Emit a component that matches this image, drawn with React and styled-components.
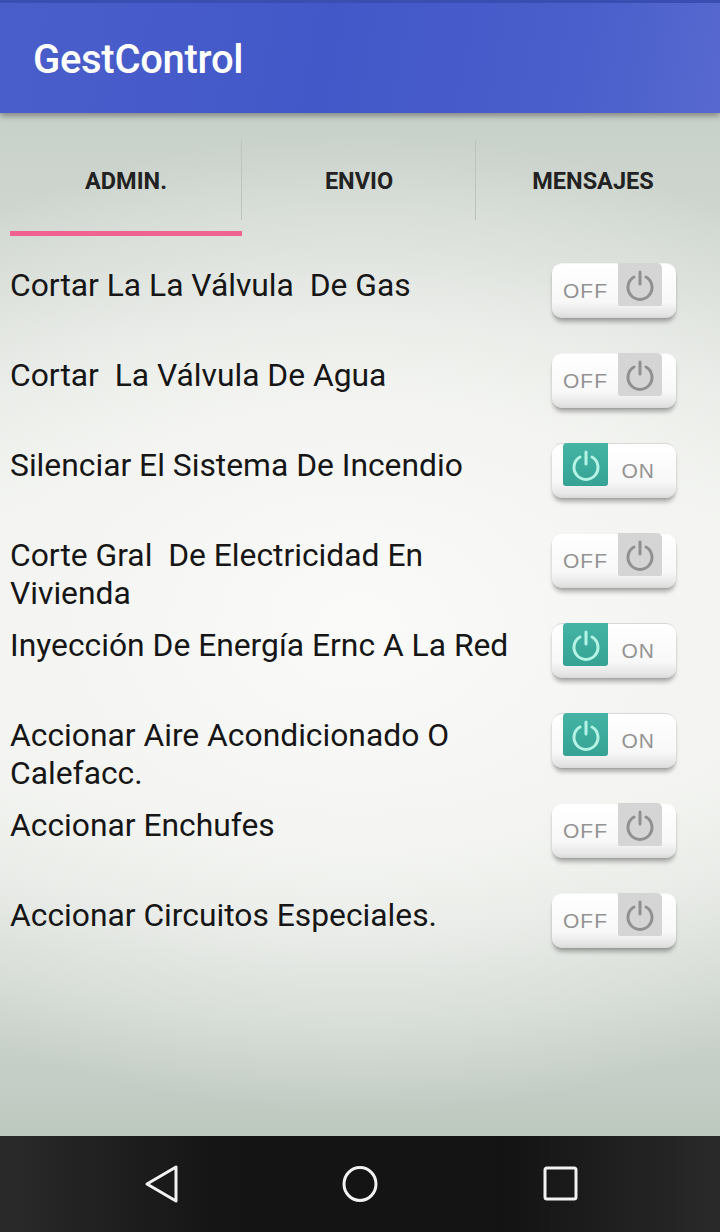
import React from 'react';
import styled, { createGlobalStyle } from 'styled-components';

const GlobalStyle = createGlobalStyle`
  html, body {
    margin: 0;
    padding: 0;
  }
  body {
    font-family: Roboto, "Noto Sans", sans-serif;
  }
`;

const items = [
  { label: 'Cortar La La Válvula  De Gas', on: false },
  { label: 'Cortar  La Válvula De Agua', on: false },
  { label: 'Silenciar El Sistema De Incendio', on: true },
  { label: 'Corte Gral  De Electricidad En Vivienda', on: false },
  { label: 'Inyección De Energía Ernc A La Red', on: true },
  { label: 'Accionar Aire Acondicionado O Calefacc.', on: true },
  { label: 'Accionar Enchufes', on: false },
  { label: 'Accionar Circuitos Especiales.', on: false },
];

const tabs = ['ADMIN.', 'ENVIO', 'MENSAJES'];

function PowerIcon({ color }) {
  return (
    <svg width="34" height="34" viewBox="0 0 34 34">
      <path d="M11 9 A12 12 0 1 0 23 9" fill="none" stroke={color} strokeWidth="3" strokeLinecap="round" />
      <line x1="17" y1="4" x2="17" y2="16" stroke={color} strokeWidth="3" strokeLinecap="round" />
    </svg>
  );
}

function Toggle({ on }) {
  return (
    <SwitchBody on={on}>
      {on ? (
        <>
          <Knob on>
            <PowerIcon color="#b5f3e6" />
          </Knob>
          <SwitchLabel on>ON</SwitchLabel>
        </>
      ) : (
        <>
          <SwitchLabel>OFF</SwitchLabel>
          <Knob>
            <PowerIcon color="#909090" />
          </Knob>
        </>
      )}
    </SwitchBody>
  );
}

export default function App() {
  return (
    <Page>
      <GlobalStyle />
      <AppBar>
        <Title>GestControl</Title>
      </AppBar>
      <Content>
        <TabBar>
          {tabs.map((t, i) => (
            <Tab key={t} active={i === 0} divider={i < tabs.length - 1}>
              {t}
            </Tab>
          ))}
        </TabBar>
        <List>
          {items.map((item) => (
            <Row key={item.label}>
              <Label>{item.label}</Label>
              <Toggle on={item.on} />
            </Row>
          ))}
        </List>
      </Content>
      <NavBar>
        <NavSlot>
          <svg width="40" height="40" viewBox="0 0 40 40">
            <path d="M36 3 L36 37 L7 20 Z" fill="none" stroke="#f2f2f2" strokeWidth="3" strokeLinejoin="round" />
          </svg>
        </NavSlot>
        <NavSlot>
          <svg width="40" height="40" viewBox="0 0 40 40">
            <ellipse cx="20" cy="20" rx="16" ry="16.5" fill="none" stroke="#f2f2f2" strokeWidth="3" />
          </svg>
        </NavSlot>
        <NavSlot>
          <svg width="40" height="40" viewBox="0 0 40 40">
            <rect x="5" y="4" width="31" height="31" rx="2" fill="none" stroke="#f2f2f2" strokeWidth="3" />
          </svg>
        </NavSlot>
      </NavBar>
    </Page>
  );
}

const Page = styled.div`
  width: 720px;
  height: 1232px;
  display: flex;
  flex-direction: column;
  overflow: hidden;
`;

const AppBar = styled.header`
  height: 113px;
  flex: none;
  display: flex;
  align-items: center;
  padding: 0 33px;
  box-sizing: border-box;
  background: linear-gradient(100deg, #4a5ecb 0%, #4358c8 45%, #4a5fcb 80%, #5769d0 100%);
  border-top: 3px solid #3a4db0;
  box-shadow: 0 3px 6px rgba(0, 0, 0, 0.35);
  position: relative;
  z-index: 2;
`;

const Title = styled.h1`
  margin: 0;
  padding-top: 2px;
  font-family: Roboto, sans-serif;
  font-weight: 500;
  font-size: 40px;
  color: #ffffff;
  letter-spacing: -0.3px;
`;

const Content = styled.main`
  flex: 1;
  background:
    radial-gradient(ellipse 95% 48% at 50% 50%, rgba(250, 251, 248, 1) 0%, rgba(245, 246, 243, 0.9) 45%, rgba(245, 246, 243, 0) 100%),
    linear-gradient(180deg, #c7d0c9 0%, #d3d9d3 15%, #eef0ec 40%, #eef0ec 65%, #d4dad4 82%, #bdc8bf 100%);
`;

const TabBar = styled.nav`
  display: grid;
  grid-template-columns: 232px 234px 234px;
  padding: 0 10px;
  height: 123px;
`;

const Tab = styled.div`
  display: flex;
  align-items: center;
  justify-content: center;
  padding-top: 17px;
  font-family: Roboto, sans-serif;
  font-weight: 700;
  font-size: 23.5px;
  color: #222;
  position: relative;
  border-bottom: 5px solid ${(p) => (p.active ? '#f06292' : 'transparent')};
  &::after {
    content: '';
    display: ${(p) => (p.divider ? 'block' : 'none')};
    position: absolute;
    right: 0;
    top: 27px;
    bottom: 11px;
    width: 1px;
    background: #bcc4be;
  }
`;

const List = styled.div`
  padding-top: 20px;
`;

const Row = styled.div`
  height: 90px;
  display: flex;
  align-items: flex-start;
  padding: 0 44px 0 10px;
`;

const Label = styled.div`
  flex: 1;
  padding-top: 10px;
  padding-right: 10px;
  font-family: Roboto, sans-serif;
  font-size: 31.8px;
  line-height: 38px;
  color: #161616;
  white-space: pre-wrap;
`;

const SwitchBody = styled.div`
  flex: none;
  margin-top: 7px;
  width: 124px;
  height: 55px;
  box-sizing: border-box;
  display: flex;
  align-items: flex-start;
  justify-content: space-between;
  padding: 0 ${(p) => (p.on ? 21 : 14)}px 0 11px;
  border-radius: 10px;
  border-top: 1px solid ${(p) => (p.on ? '#d8d8d8' : '#f4f4f4')};
  background: linear-gradient(180deg, #ffffff 0%, #f8f8f8 70%, #e6e6e6 92%, #d9d9d9 100%);
  box-shadow: 0 5px 4px -1px rgba(0, 0, 0, 0.28), 0 1px 2px rgba(0, 0, 0, 0.1);
`;

const Knob = styled.div`
  width: ${(p) => (p.on ? 45 : 44)}px;
  height: 43px;
  margin-top: -1px;
  display: flex;
  align-items: center;
  justify-content: center;
  background: ${(p) => (p.on ? 'linear-gradient(180deg, #45b4a5, #35a294)' : '#d5d5d5')};
  border-radius: ${(p) => (p.on ? '4px 0 3px 3px' : '0 5px 2px 2px')};
`;

const SwitchLabel = styled.span`
  align-self: center;
  margin-top: -1px;
  font-family: "Liberation Sans", Arial, sans-serif;
  font-weight: 400;
  font-size: 21px;
  color: #939393;
  letter-spacing: 1px;
`;

const NavBar = styled.footer`
  height: 96px;
  flex: none;
  display: grid;
  grid-template-columns: repeat(3, 200px);
  justify-content: center;
  align-items: center;
  background: linear-gradient(90deg, #2a2a2a 0%, #151515 30%, #131313 70%, #2a2a2a 100%);
`;

const NavSlot = styled.div`
  display: flex;
  justify-content: center;
`;
